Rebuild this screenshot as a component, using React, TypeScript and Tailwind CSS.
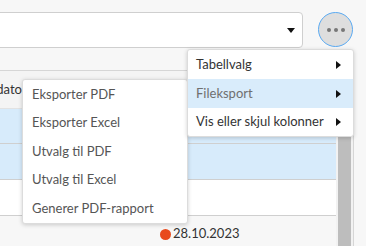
import React from "react";

const Arrow = () => (
  <svg width="5" height="8" viewBox="0 0 5 8" className="shrink-0">
    <path d="M0 0 L5 4 L0 8 Z" fill="#111" />
  </svg>
);

export default function App() {
  const sub = [
    "Eksporter PDF",
    "Eksporter Excel",
    "Utvalg til PDF",
    "Utvalg til Excel",
    "Generer PDF-rapport",
  ];
  return (
    <div
      className="relative w-[366px] h-[246px] overflow-hidden bg-[#f7f7f7]"
      style={{ fontFamily: "Lato, 'Noto Sans', sans-serif" }}
    >
      {/* top bar */}
      <div className="flex items-start pt-[12px]">
        <div className="ml-[-10px] w-[313px] h-[36px] bg-white border border-[#cfcfcf] rounded-[4px] flex items-center justify-end pr-[7px]">
          <svg width="8" height="5" viewBox="0 0 8 5">
            <path d="M0 0 L8 0 L4 5 Z" fill="#111" />
          </svg>
        </div>
        <div className="ml-[15px] w-[35px] h-[35px] rounded-full bg-[#dedede] border-[1.5px] border-[#5aaaf2] flex items-center justify-center gap-[3px]">
          <span className="w-[4px] h-[4px] rounded-full bg-[#777]" />
          <span className="w-[4px] h-[4px] rounded-full bg-[#777]" />
          <span className="w-[4px] h-[4px] rounded-full bg-[#777]" />
        </div>
      </div>

      {/* table */}
      <div className="mt-[22px] w-[354px] border-t border-r border-[#d6d6d6] flex">
        <div className="w-[336px] flex flex-col text-[13px] text-[#333]">
          <div className="h-[38px] bg-[#f4f4f4] border-b border-[#e2e2e2] flex items-center">
            <div className="w-[22px] overflow-hidden flex justify-end whitespace-nowrap">
              Sluttdato
            </div>
          </div>
          <div className="h-[35px] bg-[#d7ebfb] border-b border-[#cfcfcf]" />
          <div className="h-[36px] bg-[#d7ebfb] border-b border-[#cfcfcf]" />
          <div className="h-[36px] bg-white border-b border-[#cfcfcf]" />
          <div className="h-[36px] bg-[#f7f7f7] flex items-center pl-[160px]">
            <span className="w-[11px] h-[11px] rounded-full bg-[#e84a1c] mr-[2px]" />
            <span>28.10.2023</span>
          </div>
        </div>
        <div className="w-[17px] bg-[#f2f2f2] flex justify-center pt-[60px]">
          <div className="w-[13px] h-[200px] bg-[#bdbdbd]" />
        </div>
      </div>

      {/* submenu */}
      <div className="absolute left-[22px] top-[79px] w-[166px] bg-white rounded-[3px] border border-[#dcdcdc] shadow-[0_1px_4px_rgba(0,0,0,0.18)] text-[13px] text-[#555]">
        {sub.map((s) => (
          <div key={s} className="h-[28.6px] flex items-center pl-[9px] whitespace-nowrap">
            {s}
          </div>
        ))}
      </div>

      {/* main menu */}
      <div className="absolute left-[187px] top-[49px] w-[167px] bg-white rounded-[3px] border border-[#dcdcdc] shadow-[0_1px_4px_rgba(0,0,0,0.18)] text-[13px] text-[#333]">
        <div className="h-[29px] flex items-center justify-between pl-[8px] pr-[12px]">
          <span>Tabellvalg</span>
          <Arrow />
        </div>
        <div className="h-[29px] flex items-center justify-between pl-[8px] pr-[12px] bg-[#d9ecfb] text-[#6f6f6f]">
          <span>Fileksport</span>
          <Arrow />
        </div>
        <div className="h-[28px] flex items-center justify-between pl-[8px] pr-[12px]">
          <span>Vis eller skjul kolonner</span>
          <Arrow />
        </div>
      </div>
    </div>
  );
}
